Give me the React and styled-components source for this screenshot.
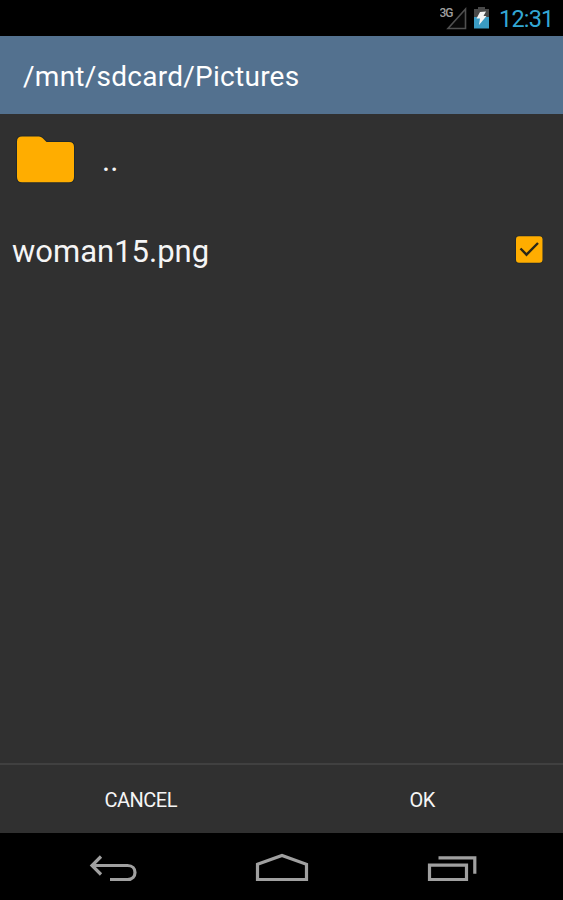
import React from 'react';
import styled, { createGlobalStyle } from 'styled-components'

const GlobalStyle = createGlobalStyle`
  body {
    margin:0;
    background-color:#000;
    font-family:Roboto, sans-serif;
  }
`
const Screen = styled.div`
  display:flex;
  flex-direction:column;
  width:563px;
  height:900px;
  overflow:hidden;
  background-color:#303030;
  color:#fff;
`
const StatusBar = styled.div`
  display:flex;
  justify-content:flex-end;
  box-sizing:border-box;
  height:36px;
  padding-right:10px;
  background-color:#000;
`
const Clock = styled.span`
  width:54px;
  margin-left:9px;
  color:#33a7d4;
  font-size:23.5px;
  line-height:38px;
  letter-spacing:-0.8px;
  white-space:nowrap;
`
const Header = styled.div`
  box-sizing:border-box;
  height:78px;
  padding-left:23px;
  background-color:#53718f;
`
const Path = styled.h1`
  margin:0;
  font-size:28px;
  font-weight:400;
  line-height:81px;
  letter-spacing:0.26px;
`
const List = styled.div`
  flex:1;
`
const Row = styled.div`
  display:flex;
  align-items:center;
  box-sizing:border-box;
  height:${({ $height }) => $height}px;
  padding:0 20px 0 12px;
`
const FileName = styled.span`
  flex:1;
  padding-top:3px;
  padding-left:${({ $indent }) => $indent || 0}px;
  color:#f5f5f5;
  font-size:31px;
  line-height:36px;
`
const ParentName = styled(FileName)`
  padding-top:4px;
`
const Buttons = styled.div`
  display:flex;
  box-sizing:border-box;
  height:70px;
  border-top:2px solid #404040;
`
const Button = styled.button`
  flex:1;
  padding:2px 0 0;
  border:0;
  background:none;
  color:#f5f5f5;
  font-family:inherit;
  font-size:20px;
  letter-spacing:${({ $spacing }) => $spacing || 0}px;
`
const NavBar = styled.div`
  display:flex;
  justify-content:center;
  height:67px;
  background-color:#000;
`
const NavIcon = styled.svg`
  width:170px;
  height:67px;
  fill:none;
  stroke:#a0a0a0;
  stroke-width:3.2;
`

function StatusIcons() {
  return (
    <svg width="50" height="36" viewBox="440 0 50 36">
      <path d="M448 28.5 L465.5 28.5 L465.5 9 Z" fill="#080808" stroke="#505050" strokeWidth="1.6" />
      <text x="439.5" y="17" fill="#a0a0a0" fontSize="12" fontWeight="500" textLength="14">3G</text>
      <path d="M478 7h7v2h4v8h-15V9h4z" fill="#484848" />
      <path d="M474 17h15v11.5h-15z" fill="#3a9bc3" />
      <path d="M480 12l6-.5-2.5 4.5h3l-7.5 9 1-6.5h-3.5z" fill="#f4f4f4" />
    </svg>
  )
}

function FolderIcon() {
  return (
    <svg width="66" height="56" viewBox="12 131 66 56">
      <path
        d="M22 136.5H39Q41 136.5 42.5 138L46.5 142H69Q74 142 74 147V177Q74 182.3 69 182.3H22Q17 182.3 17 177V141.5Q17 136.5 22 136.5Z"
        fill="#ffad00"
        stroke="#20292b"
        strokeWidth="2"
        paintOrder="stroke"
      />
    </svg>
  )
}

function CheckedBox() {
  return (
    <svg width="28" height="30" viewBox="515 235 28 30">
      <rect x="516" y="236.2" width="26.5" height="26.5" rx="3" fill="#ffad00" stroke="#20292b" strokeWidth="1.5" paintOrder="stroke" />
      <path d="M520.5 248.5l6 6.2 11.5-11.7" fill="none" stroke="#2b2717" strokeWidth="2.4" />
    </svg>
  )
}

export default function App() {
  return (
    <Screen>
      <GlobalStyle />
      <StatusBar>
        <StatusIcons />
        <Clock>12:31</Clock>
      </StatusBar>
      <Header>
        <Path>/mnt/sdcard/Pictures</Path>
      </Header>
      <List>
        <Row $height={90}>
          <FolderIcon />
          <ParentName $indent={24}>..</ParentName>
        </Row>
        <Row $height={92}>
          <FileName>woman15.png</FileName>
          <CheckedBox />
        </Row>
      </List>
      <Buttons>
        <Button $spacing={-0.5}>CANCEL</Button>
        <Button $spacing={-0.3}>OK</Button>
      </Buttons>
      <NavBar>
        <NavIcon viewBox="27 833 170 67">
          <path d="M101 856.5L92 865.5L101 874.5M92 865.5H127.5C137.5 865.5 137.5 879.5 127.5 879.5H110" />
        </NavIcon>
        <NavIcon viewBox="197 833 170 67">
          <path d="M257.5 864.3L282 855.5L306.5 864.3V879.5H257.5Z" />
        </NavIcon>
        <NavIcon viewBox="367 833 170 67">
          <path d="M429.5 865.2H466.5V879.5H429.5ZM438.5 857.8H474.8V873.8" />
        </NavIcon>
      </NavBar>
    </Screen>
  )
}
